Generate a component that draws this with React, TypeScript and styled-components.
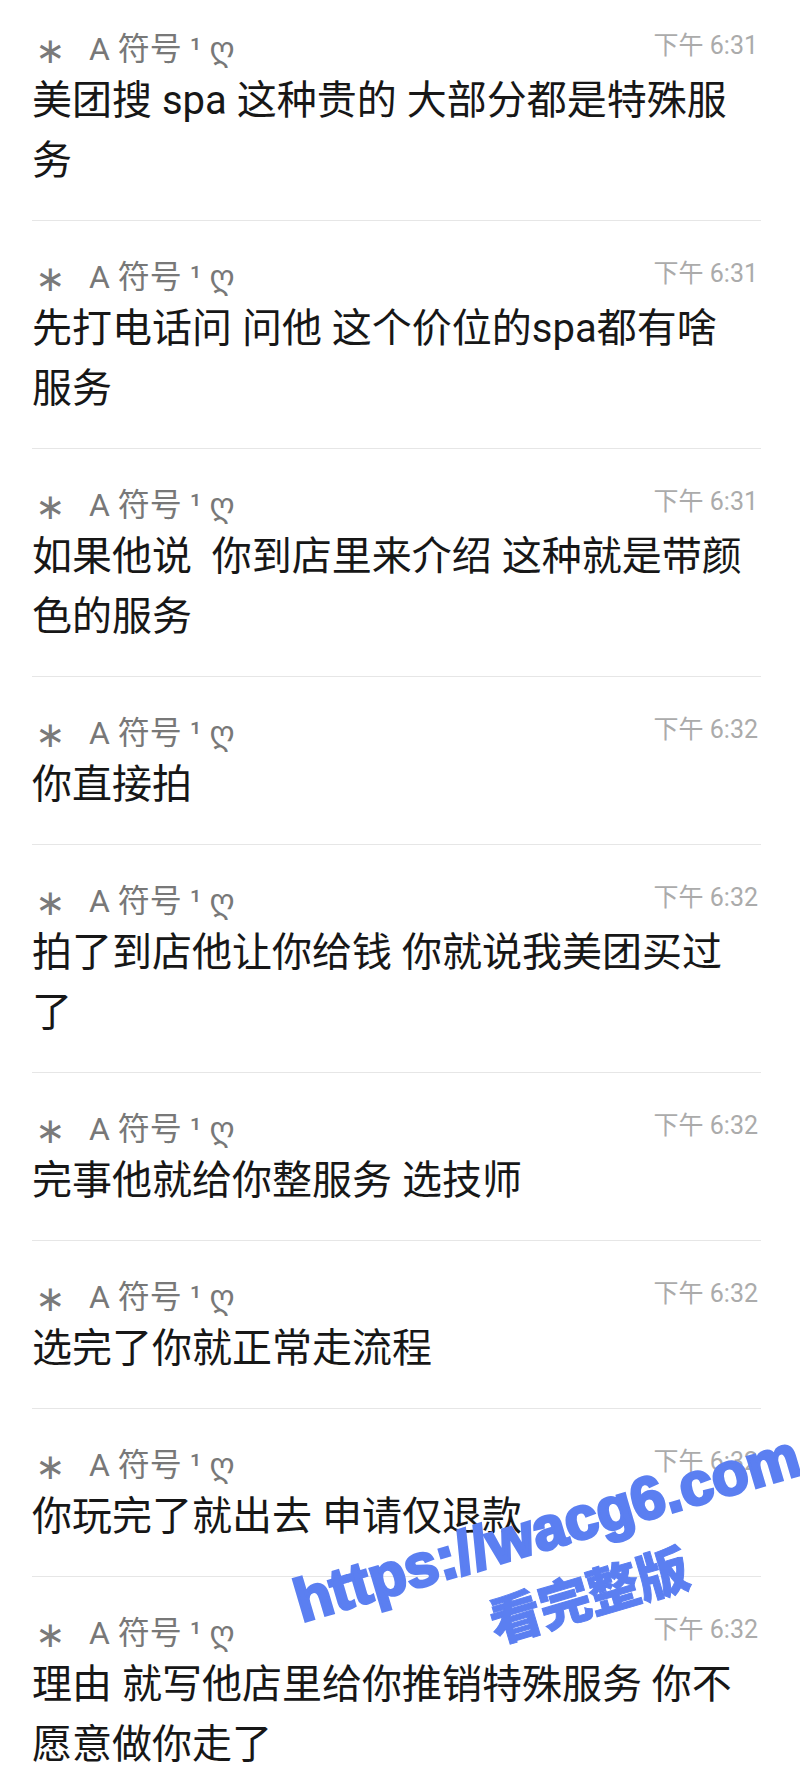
import React from "react";
import styled, { createGlobalStyle } from "styled-components";

interface Message {
  time: string;
  text: string;
}

const SENDER = "A 符号 ¹ ღ";

const messages: Message[] = [
  { time: "下午 6:31", text: "美团搜 spa 这种贵的 大部分都是特殊服务" },
  { time: "下午 6:31", text: "先打电话问 问他 这个价位的spa都有啥服务" },
  { time: "下午 6:31", text: "如果他说 \u00a0你到店里来介绍 这种就是带颜色的服务" },
  { time: "下午 6:32", text: "你直接拍" },
  { time: "下午 6:32", text: "拍了到店他让你给钱 你就说我美团买过了" },
  { time: "下午 6:32", text: "完事他就给你整服务 选技师" },
  { time: "下午 6:32", text: "选完了你就正常走流程" },
  { time: "下午 6:32", text: "你玩完了就出去 申请仅退款" },
  { time: "下午 6:32", text: "理由 就写他店里给你推销特殊服务 你不愿意做你走了" },
];

const App: React.FC = () => {
  return (
    <Page>
      <GlobalStyle />
      <List>
        {messages.map((m, i) => (
          <Item key={i} $first={i === 0} $last={i === messages.length - 1}>
            <Header>
              <Sender>
                <Star>∗</Star>
                {SENDER}
              </Sender>
              <Time>{m.time}</Time>
            </Header>
            <Body>{m.text}</Body>
          </Item>
        ))}
      </List>
      <WatermarkUrl>https://wacg6.com</WatermarkUrl>
      <WatermarkLabel>看完整版</WatermarkLabel>
    </Page>
  );
};

const GlobalStyle = createGlobalStyle`
  html, body {
    margin: 0;
    padding: 0;
    background: #ffffff;
  }
  body {
    font-family: Roboto, "Noto Sans CJK SC", "DejaVu Sans", sans-serif;
  }
`;

const Page = styled.div`
  position: relative;
  width: 800px;
  height: 1787px;
  overflow: hidden;
  background: #ffffff;
`;

const List = styled.div`
  display: flex;
  flex-direction: column;
  padding: 0 39px 0 32px;
`;

const Item = styled.div<{ $first: boolean; $last: boolean }>`
  display: flex;
  flex-direction: column;
  gap: 2px;
  padding: ${({ $first }) => ($first ? "29px" : "36px")} 0 29px;
  border-bottom: ${({ $last }) => ($last ? "none" : "1px solid #e6e6e6")};
`;

const Header = styled.div`
  display: flex;
  align-items: center;
  justify-content: space-between;
  height: 40px;
  padding: 0 3px;
`;

const Sender = styled.div`
  display: flex;
  align-items: center;
  font-size: 32px;
  line-height: 40px;
  color: #787878;
  white-space: pre;
  font-family: Roboto, "Noto Sans CJK SC", "DejaVu Sans", sans-serif;
`;

const Star = styled.span`
  display: inline-block;
  width: 54px;
  margin-top: 4px;
  font-family: "DejaVu Sans", sans-serif;
  font-size: 36px;
  color: #7a7a7a;
`;

const Time = styled.div`
  font-size: 25px;
  line-height: 30px;
  color: #ababab;
  margin-bottom: 6px;
  font-family: Roboto, "Noto Sans CJK SC", sans-serif;
`;

const Body = styled.div`
  max-width: 712px;
  font-size: 40px;
  line-height: 60px;
  color: #171717;
  font-family: Roboto, "Noto Sans CJK SC", sans-serif;
  word-break: break-all;
`;

// watermark stamped over the screenshot
const Watermark = styled.div`
  position: absolute;
  color: #5b7ff1;
  white-space: nowrap;
  transform-origin: left center;
  transform: rotate(-16.5deg);
  pointer-events: none;
`;

const WatermarkUrl = styled(Watermark)`
  left: 296px;
  top: 1573px;
  font-family: "Liberation Sans", Arial, sans-serif;
  font-weight: 700;
  font-size: 60px;
  line-height: 60px;
  -webkit-text-stroke: 3px #5b7ff1;
`;

const WatermarkLabel = styled(Watermark)`
  left: 490px;
  top: 1595px;
  font-family: "Noto Sans CJK SC", sans-serif;
  font-weight: 900;
  font-size: 52px;
  line-height: 54px;
  letter-spacing: -1px;
  -webkit-text-stroke: 1px #5b7ff1;
`;

export default App;
